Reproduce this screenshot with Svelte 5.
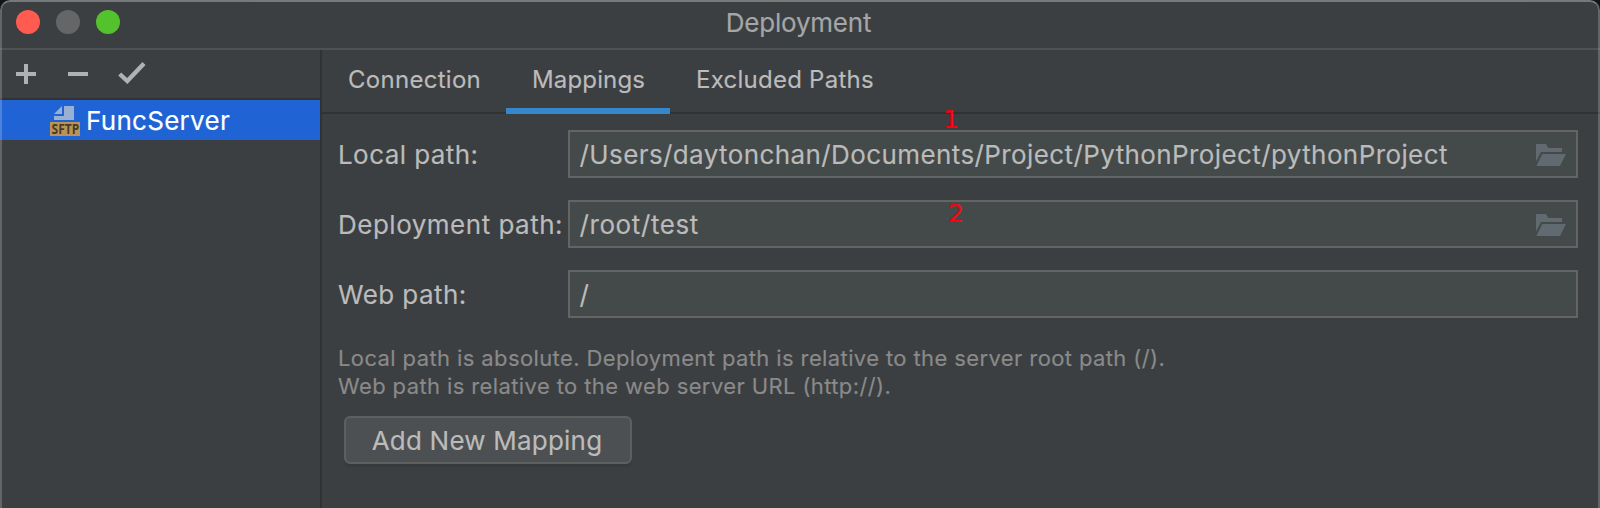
<script>
  const tabs = [
    { label: 'Connection', spacing: 0.28 },
    { label: 'Mappings', spacing: 0.15, active: true },
    { label: 'Excluded Paths', spacing: 0.25 },
  ];
  const fields = [
    {
      label: 'Local path:',
      labelSpacing: 0.42,
      value: '/Users/daytonchan/Documents/Project/PythonProject/pythonProject',
      spacing: 0.4,
      browse: true,
    },
    { label: 'Deployment path:', labelSpacing: 0.5, value: '/root/test', spacing: 0.6, browse: true },
    { label: 'Web path:', labelSpacing: 0.42, value: '/', spacing: 0.4 },
  ];
</script>

<div class="window">
  <header class="titlebar">
    <div class="lights">
      <i class="light close"></i>
      <i class="light minimize"></i>
      <i class="light zoom"></i>
    </div>
    <h1>Deployment</h1>
  </header>

  <div class="body">
    <aside>
      <div class="toolbar">
        <svg width="20" height="20" viewBox="0 0 20 20"><path d="M8 0h4v8h8v4h-8v8H8v-8H0V8h8z" /></svg>
        <svg class="minus" width="20" height="20" viewBox="0 0 20 20"><path d="M0 8h20v4H0z" /></svg>
        <svg class="check" width="28" height="22" viewBox="0 0 28 22"><path d="M1.7 12L9.3 19L26 1.6" /></svg>
      </div>
      <div class="server">
        <svg width="30" height="30" viewBox="0 0 30 30">
          <path fill="#9ab0d2" d="M14 0h10v14H4v-4h10z" />
          <path fill="#9ab0d2" d="M12 0v8H4z" />
          <rect fill="#b9945a" y="16" width="30" height="14" />
          <text x="1.6" y="28" textLength="27.6" lengthAdjust="spacingAndGlyphs">SFTP</text>
        </svg>
        <span>FuncServer</span>
      </div>
    </aside>

    <main>
      <nav>
        {#each tabs as tab}
          <div class="tab" class:active={tab.active} style="letter-spacing:{tab.spacing}px">{tab.label}</div>
        {/each}
      </nav>

      <div class="form">
        {#each fields as field}
          <div class="row">
            <span class="label" style="letter-spacing:{field.labelSpacing}px">{field.label}</span>
            <div class="input">
              <span style="letter-spacing:{field.spacing}px">{field.value}</span>
              {#if field.browse}
                <svg width="30" height="22" viewBox="0 0 30 22">
                  <path d="M0 0h10l2.4 4H26v4H5L0 17.5z" />
                  <path d="M6.3 10H30l-6 12H0.3z" />
                </svg>
              {/if}
            </div>
          </div>
        {/each}
      </div>

      <p class="hint">
        Local path is absolute. Deployment path is relative to the server root path (/).<br />
        Web path is relative to the web server URL (http://).
      </p>
      <button>Add New Mapping</button>
    </main>
  </div>

  <span class="mark one">1</span>
  <span class="mark two">2</span>
  <div class="frame"></div>
</div>

<style>
  :global(body) {
    background: #131416;
  }
  .window {
    position: relative;
    box-sizing: border-box;
    width: 1600px;
    height: 508px;
    overflow: hidden;
    display: flex;
    flex-direction: column;
    background: #3c3f41;
    border-radius: 10px 10px 0 0;
    font-family: Inter, sans-serif;
    font-size: 26px;
    color: #bbbbbb;
    white-space: nowrap;
    -webkit-text-stroke: 0.15px;
  }
  .titlebar {
    box-sizing: border-box;
    height: 50px;
    flex: none;
    display: grid;
    grid-template-columns: 1fr auto 1fr;
    border-bottom: 2px solid #515151;
  }
  .lights {
    display: flex;
    gap: 16px;
    padding: 10px 0 0 16px;
  }
  .light {
    width: 24px;
    height: 24px;
    border-radius: 50%;
  }
  .close { background: #ff5b51; }
  .minimize { background: #656668; }
  .zoom { background: #54c22c; }
  h1 {
    margin: 0;
    padding-right: 3px;
    font-size: 26px;
    font-weight: 400;
    line-height: 45px;
    letter-spacing: -0.22px;
    color: #a5a6a7;
  }
  .body {
    flex: 1;
    display: flex;
    min-height: 0;
  }
  aside {
    box-sizing: border-box;
    width: 322px;
    border-right: 2px solid #323232;
  }
  .toolbar {
    box-sizing: border-box;
    height: 50px;
    display: flex;
    align-items: flex-start;
    padding: 14px 0 0 16px;
    border-bottom: 2px solid #323232;
    fill: #afb1b3;
  }
  .minus { margin-left: 32px; }
  .check {
    margin: -2px 0 0 29.5px;
    fill: none;
    stroke: #afb1b3;
    stroke-width: 4.4;
  }
  .server {
    display: flex;
    height: 40px;
    padding-left: 50px;
    background: #2063d4;
    color: #fff;
    line-height: 42px;
    letter-spacing: 0.28px;
  }
  .server svg {
    margin: 6px 6px 0 0;
    overflow: visible;
  }
  .server text {
    font: 700 13.5px "Open Sans", sans-serif;
    letter-spacing: 0;
    fill: #4b3a24;
  }
  main {
    flex: 1;
    display: flex;
    flex-direction: column;
    align-items: flex-start;
  }
  nav {
    box-sizing: border-box;
    height: 64px;
    align-self: stretch;
    display: flex;
    border-bottom: 2px solid #323232;
    font-size: 24px;
  }
  .tab {
    box-sizing: border-box;
    height: 64px;
    padding: 0 26px;
    line-height: 59px;
  }
  .active {
    width: 164px;
    border-bottom: 6px solid #3688cc;
  }
  .tab:first-child { width: 184px; }
  .form {
    display: flex;
    flex-direction: column;
    gap: 22px;
    padding: 16px 0 0 16px;
  }
  .row {
    display: flex;
    height: 48px;
  }
  .label {
    width: 230px;
    line-height: 49px;
  }
  .input {
    box-sizing: border-box;
    width: 1010px;
    display: flex;
    justify-content: space-between;
    align-items: flex-start;
    padding: 0 10px 0 9.5px;
    border: 2px solid #646464;
    background: #444a49;
    line-height: 45px;
  }
  .input svg {
    margin-top: 12px;
    fill: #616a70;
  }
  .hint {
    margin: 26px 0 0 16px;
    font-size: 22px;
    line-height: 28px;
    letter-spacing: 0.39px;
    color: #8a8a8a;
  }
  button {
    box-sizing: border-box;
    width: 288px;
    height: 48px;
    margin: 16px 0 0 22px;
    padding: 0 2px 0 0;
    border: 2px solid #5e6060;
    border-radius: 6px;
    background: #4c5052;
    box-shadow: 0 3px 0 #37393b;
    color: #bbbbbb;
    font: 26px Inter, sans-serif;
    letter-spacing: 0.21px;
    -webkit-text-stroke: 0.15px;
  }
  .mark {
    position: absolute;
    font: 25px/30px "DejaVu Sans", sans-serif;
    color: #ff0011;
    -webkit-text-stroke: 0;
  }
  .one { left: 943px; top: 105px; }
  .two { left: 948px; top: 199px; }
  .frame {
    position: absolute;
    inset: 0;
    border: 2px solid rgba(255, 255, 255, 0.2);
    border-top-color: rgba(255, 255, 255, 0.3);
    border-bottom: 0;
    border-radius: 10px 10px 0 0;
    pointer-events: none;
  }
</style>
